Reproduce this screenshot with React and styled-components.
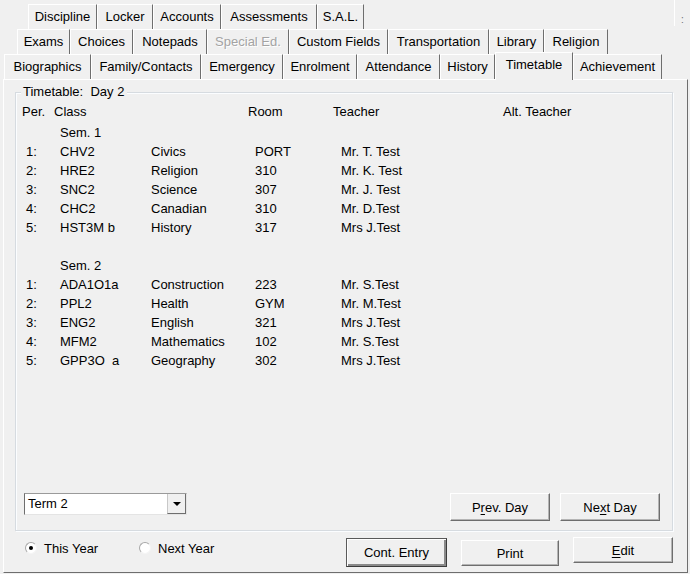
import React from 'react';
import styled, { createGlobalStyle } from 'styled-components';

const GlobalStyle = createGlobalStyle`
  html, body {
    margin: 0;
    padding: 0;
    background: #f0f0f0;
  }
  body {
    font-family: "Liberation Sans", Arial, sans-serif;
    font-size: 13px;
    color: #000;
  }
  * { box-sizing: border-box; }
`;

const Window = styled.div`
  width: 690px;
  height: 574px;
  padding-top: 4px;
  display: flex;
  flex-direction: column;
  background: #f0f0f0;
  overflow: hidden;
`;

const TabRow = styled.div`
  display: flex;
  align-items: flex-end;
  height: 25px;
  padding-left: ${(p) => p.$indent}px;
  position: relative;
  z-index: ${(p) => p.$z || 0};
`;

const Tab = styled.div`
  width: ${(p) => p.$w}px;
  height: ${(p) => (p.$active ? 28 : 25)}px;
  margin-bottom: ${(p) => (p.$active ? -1 : 0)}px;
  line-height: ${(p) => (p.$active ? 23 : 24)}px;
  text-align: center;
  white-space: nowrap;
  background: #f0f0f0;
  border-top: 1px solid #fff;
  border-left: 1px solid #fff;
  border-right: 1px solid #6e6e6e;
  color: ${(p) => (p.$disabled ? '#a3a3a3' : '#000')};
  text-shadow: ${(p) => (p.$disabled ? '1px 1px 0 #fff' : 'none')};
`;

const Spinner = styled.div`
  margin-left: auto;
  align-self: flex-start;
  width: 16px;
  height: 26px;
  margin-top: -4px;
  border-left: 1px solid #fff;
  color: #6e6e6e;
  font-size: 10px;
  text-align: center;
  line-height: 40px;
`;

const Page = styled.div`
  flex: 1;
  margin: 0 2px 1px 3px;
  border-top: 1px solid #fff;
  border-left: 1px solid #fff;
  border-right: 1px solid #6e6e6e;
  border-bottom: 1px solid #6e6e6e;
  padding: 12px 14px 0 11px;
  display: flex;
  flex-direction: column;
`;

const Group = styled.div`
  position: relative;
  height: 439px;
  border: 1px solid #d6dbe0;
  box-shadow: inset 1px 1px 0 #fbfdff, 1px 1px 0 #fbfdff;
  padding: 9px 12px 9px 6px;
  display: flex;
  flex-direction: column;
`;

const Legend = styled.div`
  position: absolute;
  top: -10px;
  left: 5px;
  padding: 0 3px 0 2px;
  background: #f0f0f0;
  line-height: 18px;
  white-space: pre;
`;

const HeaderRow = styled.div`
  display: grid;
  grid-template-columns: 32px 194px 85px 170px 1fr;
  line-height: 19px;
  margin-bottom: 2px;
`;

const Section = styled.div`
  margin-top: ${(p) => p.$gap}px;
`;

const SemLabel = styled.div`
  line-height: 19px;
  padding-left: 38px;
`;

const DataRow = styled.div`
  display: grid;
  grid-template-columns: 34px 91px 104px 86px 1fr;
  line-height: 19px;
  padding-left: 4px;
  white-space: pre;
`;

const GroupFooter = styled.div`
  margin-top: auto;
  display: flex;
  align-items: flex-start;
  padding-left: 2px;
`;

const Combo = styled.div`
  width: 163px;
  height: 22px;
  margin-top: 0;
  display: flex;
  background: #fff;
  border-top: 1px solid #9a9a9a;
  border-left: 1px solid #6e6e6e;
  border-right: 1px solid #e4e4e4;
  border-bottom: 1px solid #e4e4e4;
`;

const ComboText = styled.div`
  flex: 1;
  padding-left: 3px;
  line-height: 19px;
`;

const ComboButton = styled.div`
  width: 19px;
  height: 20px;
  background: #f0f0f0;
  border-left: 1px solid #c8c8c8;
  border-right: 1px solid #6e6e6e;
  border-bottom: 1px solid #6e6e6e;
  display: flex;
  align-items: center;
  justify-content: center;
`;

const Arrow = styled.div`
  width: 0;
  height: 0;
  border-left: 4px solid transparent;
  border-right: 4px solid transparent;
  border-top: 4px solid #000;
`;

const ButtonGroup = styled.div`
  margin-left: auto;
  display: flex;
  gap: ${(p) => p.$gap}px;
`;

const Button = styled.div`
  width: ${(p) => p.$w}px;
  height: ${(p) => p.$h || 28}px;
  margin-top: ${(p) => p.$top || 0}px;
  display: flex;
  align-items: center;
  justify-content: center;
  background: #f0f0f0;
  border-top: 1px solid ${(p) => (p.$default ? '#5a5a5a' : '#fff')};
  border-left: 1px solid ${(p) => (p.$default ? '#5a5a5a' : '#fff')};
  border-right: 1px solid ${(p) => (p.$default ? '#3c3c3c' : '#6e6e6e')};
  border-bottom: 1px solid ${(p) => (p.$default ? '#3c3c3c' : '#6e6e6e')};
  box-shadow: ${(p) =>
    p.$default
      ? 'inset 1px 1px 0 #fff, inset -2px -2px 0 #8a8a8a'
      : 'inset -1px -1px 0 #b4b4b4'};
  white-space: pre;
`;

const Key = styled.span`
  text-decoration: underline;
  text-underline-offset: 2px;
`;

const BottomRow = styled.div`
  display: flex;
  align-items: flex-start;
  margin-top: 6px;
`;

const RadioItem = styled.div`
  width: ${(p) => p.$w}px;
  display: flex;
  align-items: center;
  gap: 7px;
  height: 14px;
`;

const RadioCircle = styled.div`
  width: 12px;
  height: 12px;
  border-radius: 50%;
  background: #fff;
  border: 1px solid;
  border-color: #a8a8a8 #f4f4f4 #f4f4f4 #a8a8a8;
  display: flex;
  align-items: center;
  justify-content: center;
  &::after {
    content: '';
    width: 4px;
    height: 4px;
    border-radius: 50%;
    background: ${(p) => (p.$checked ? '#000' : 'transparent')};
  }
`;

const RadioGroup = styled.div`
  display: flex;
  padding-left: 10px;
  padding-top: 4px;
`;

const row1 = [
  ['Discipline', 69],
  ['Locker', 56],
  ['Accounts', 68],
  ['Assessments', 96],
  ['S.A.L.', 47],
];

const row2 = [
  ['Exams', 53],
  ['Choices', 63],
  ['Notepads', 74],
  ['Special Ed.', 82, true],
  ['Custom Fields', 99],
  ['Transportation', 101],
  ['Library', 55],
  ['Religion', 64],
];

const row3 = [
  ['Biographics', 87],
  ['Family/Contacts', 110],
  ['Emergency', 82],
  ['Enrolment', 74],
  ['Attendance', 83],
  ['History', 55],
  ['Timetable', 78],
  ['Achievement', 89],
];

const sem1 = [
  ['1:', 'CHV2', 'Civics', 'PORT', 'Mr. T. Test'],
  ['2:', 'HRE2', 'Religion', '310', 'Mr. K. Test'],
  ['3:', 'SNC2', 'Science', '307', 'Mr. J. Test'],
  ['4:', 'CHC2', 'Canadian', '310', 'Mr. D.Test'],
  ['5:', 'HST3M b', 'History', '317', 'Mrs J.Test'],
];

const sem2 = [
  ['1:', 'ADA1O1a', 'Construction', '223', 'Mr. S.Test'],
  ['2:', 'PPL2', 'Health', 'GYM', 'Mr. M.Test'],
  ['3:', 'ENG2', 'English', '321', 'Mrs J.Test'],
  ['4:', 'MFM2', 'Mathematics', '102', 'Mr. S.Test'],
  ['5:', 'GPP3O  a', 'Geography', '302', 'Mrs J.Test'],
];

const Semester = ({ label, rows, gap }) => (
  <Section $gap={gap}>
    <SemLabel>{label}</SemLabel>
    {rows.map((r) => (
      <DataRow key={r[0] + r[1]}>
        {r.map((cell, i) => (
          <span key={i}>{cell}</span>
        ))}
      </DataRow>
    ))}
  </Section>
);

const App = () => (
  <Window>
    <GlobalStyle />
    <TabRow $indent={28}>
      {row1.map(([t, w]) => (
        <Tab key={t} $w={w}>{t}</Tab>
      ))}
      <Spinner>:</Spinner>
    </TabRow>
    <TabRow $indent={17}>
      {row2.map(([t, w, d]) => (
        <Tab key={t} $w={w} $disabled={d}>{t}</Tab>
      ))}
    </TabRow>
    <TabRow $indent={4} $z={1}>
      {row3.map(([t, w]) => (
        <Tab key={t} $w={w} $active={t === 'Timetable'}>{t}</Tab>
      ))}
    </TabRow>
    <Page>
      <Group>
        <Legend>Timetable:  Day 2</Legend>
        <HeaderRow>
          <span>Per.</span>
          <span>Class</span>
          <span>Room</span>
          <span>Teacher</span>
          <span>Alt. Teacher</span>
        </HeaderRow>
        <Semester label="Sem. 1" rows={sem1} gap={0} />
        <Semester label="Sem. 2" rows={sem2} gap={19} />
        <GroupFooter>
          <Combo>
            <ComboText>Term 2</ComboText>
            <ComboButton>
              <Arrow />
            </ComboButton>
          </Combo>
          <ButtonGroup $gap={10}>
            <Button $w={100}>P<Key>r</Key>ev. Day</Button>
            <Button $w={100}>Ne<Key>x</Key>t Day</Button>
          </ButtonGroup>
        </GroupFooter>
      </Group>
      <BottomRow>
        <RadioGroup>
          <RadioItem $w={114}>
            <RadioCircle $checked />
            <span>This Year</span>
          </RadioItem>
          <RadioItem $w={100}>
            <RadioCircle />
            <span>Next Year</span>
          </RadioItem>
        </RadioGroup>
        <ButtonGroup $gap={14}>
          <Button $w={101} $h={29} $top={1} $default>Cont. Entry</Button>
          <Button $w={98} $h={26} $top={3}>Print</Button>
          <Button $w={100} $h={26}><Key>E</Key>dit</Button>
        </ButtonGroup>
      </BottomRow>
    </Page>
  </Window>
);

export default App;
